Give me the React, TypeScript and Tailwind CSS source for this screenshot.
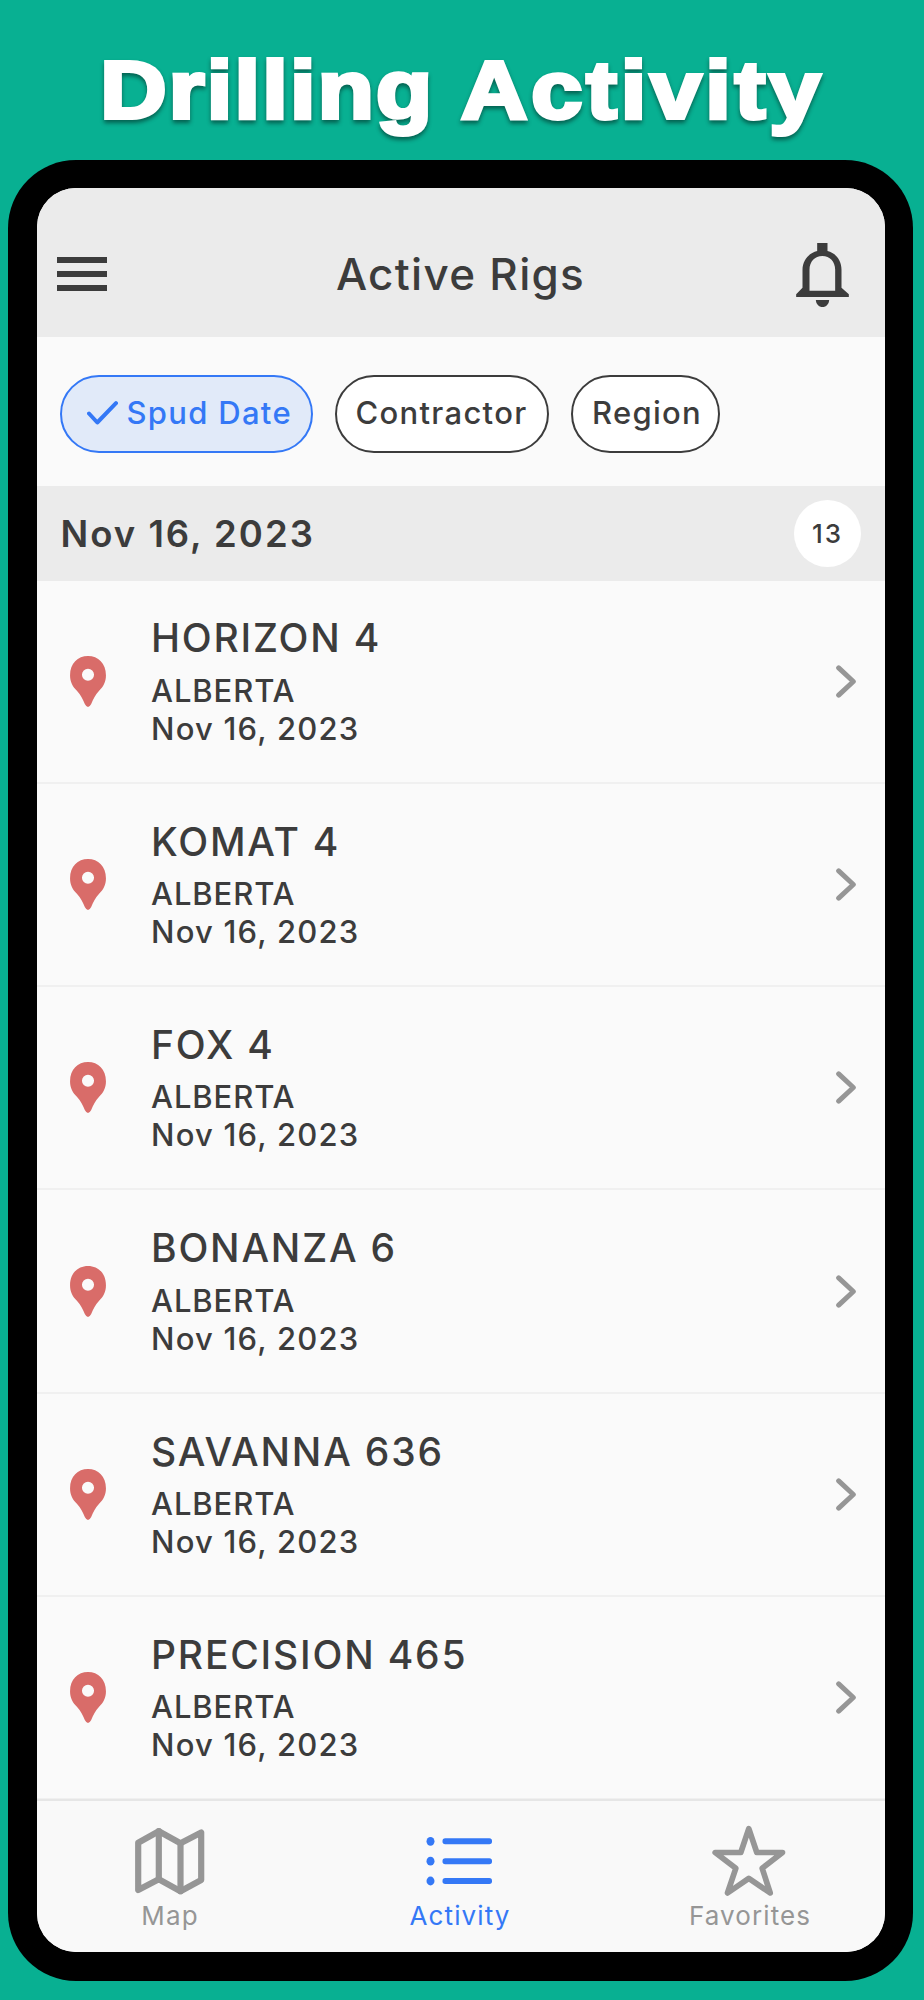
import React from 'react';
import clsx from 'clsx';

interface Rig {
  name: string;
  region: string;
  spudDate: string;
}

const RIGS: Rig[] = [
  { name: 'HORIZON 4', region: 'ALBERTA', spudDate: 'Nov 16, 2023' },
  { name: 'KOMAT 4', region: 'ALBERTA', spudDate: 'Nov 16, 2023' },
  { name: 'FOX 4', region: 'ALBERTA', spudDate: 'Nov 16, 2023' },
  { name: 'BONANZA 6', region: 'ALBERTA', spudDate: 'Nov 16, 2023' },
  { name: 'SAVANNA 636', region: 'ALBERTA', spudDate: 'Nov 16, 2023' },
  { name: 'PRECISION 465', region: 'ALBERTA', spudDate: 'Nov 16, 2023' },
];

const MenuIcon = () => (
  <svg className="w-[50px] h-[34px]" viewBox="0 0 50 34" fill="currentColor">
    <rect width="50" height="6" />
    <rect y="14" width="50" height="6" />
    <rect y="28" width="50" height="6" />
  </svg>
);

const BellIcon = () => (
  <svg className="w-[53px] h-[64px]" viewBox="0 0 158 192" fill="currentColor">
    <path
      fillRule="evenodd"
      d="M63 0H94V24C119 30 136 52 136 80V134L158 154V162H0V154L19 134V80C19 52 38 30 63 24ZM78.500 39C56 39 40 56 40 80V143H117V80C117 56 101 39 78.500 39Z"
    />
    <path d="M59 171H99C98 184 90 192 79 192C68 192 60 184 59 171Z" />
  </svg>
);

const CheckIcon = () => (
  <svg className="w-[31px] h-[24px]" viewBox="0 0 31 24" fill="none" stroke="currentColor" strokeWidth="4" strokeLinecap="round" strokeLinejoin="round">
    <path d="M2 12.500L10.300 21.500L29 2.200" />
  </svg>
);

const PinIcon = () => (
  <svg className="w-[36px] h-[51px] shrink-0 text-[#d96c69]" viewBox="0 0 107 152" fill="currentColor">
    <path
      fillRule="evenodd"
      d="M53.500 0C23 0 0 22 0 57C0 77 8 91 21 104C32 115 38 129 44 143Q53.500 161 63 143C69 129 75 115 86 104C99 91 107 77 107 57C107 22 84 0 53.500 0ZM53.500 38A18 18 0 1 1 53.500 74A18 18 0 1 1 53.500 38Z"
    />
  </svg>
);

const ChevronIcon = () => (
  <svg className="w-[20px] h-[33px] shrink-0 text-[#969696]" viewBox="0 0 60 98" fill="none" stroke="currentColor" strokeWidth="15" strokeLinecap="round" strokeLinejoin="round">
    <path d="M8 8L52 49L8 90" />
  </svg>
);

const MapIcon = () => (
  <svg className="w-[76px] h-[72px]" viewBox="0 0 76 72" fill="none" stroke="currentColor" strokeWidth="6.200" strokeLinecap="round" strokeLinejoin="round">
    <path d="M6.200 17.700L26.800 6.200L48.500 18.300L69.200 7.500V55L48.500 66.200L26.800 54.300L6.200 65V17.700Z" />
    <path d="M26.800 6.200V54.300M48.500 18.300V66.200" />
  </svg>
);

const ListIcon = () => (
  <svg className="w-[76px] h-[72px]" viewBox="0 0 76 72" fill="currentColor">
    {[16.3, 36.2, 56].map((y) => (
      <g key={y}>
        <ellipse cx="8.500" cy={y} rx="4" ry="4.400" />
        <rect x="20.500" y={y - 3} width="49.500" height="6" rx="2.700" />
      </g>
    ))}
  </svg>
);

const StarIcon = () => (
  <svg className="w-[76px] h-[72px]" viewBox="0 0 76 72" fill="none" stroke="currentColor" strokeWidth="5.700" strokeLinecap="round" strokeLinejoin="round">
    <path d="M36.800 3.700L44.800 27.500H70.500L50.200 43.300L58.200 68L36.800 53.400L15.500 68L23.800 43.300L3.200 27.500H28.800Z" />
  </svg>
);

const RigRow: React.FC<{ rig: Rig }> = ({ rig }) => (
  <li className="flex h-[203.3px] shrink-0 items-center border-b-2 border-[#f0f0f0] pl-[33.5px] pr-[28.5px]">
    <PinIcon />
    <div className="ml-[45px] flex-1 font-medium">
      <h2 className="mb-[9.5px] text-[39px] leading-[48px] tracking-[1.8px]">{rig.name}</h2>
      <p className="text-[31px] leading-[38px] tracking-[0.9px]">{rig.region}</p>
      <p className="text-[31px] leading-[38px] tracking-[1.2px]">{rig.spudDate}</p>
    </div>
    <ChevronIcon />
  </li>
);

const TabItem: React.FC<{ label: string; active?: boolean; children: React.ReactNode }> = ({ label, active, children }) => (
  <button className={clsx('flex flex-col items-center pt-6', active ? 'text-[#3478f6]' : 'text-[#969696]')}>
    {children}
    <span className="mt-[3px] text-[26px] leading-[32px] tracking-[1.1px]">{label}</span>
  </button>
);

export default function App() {
  return (
    <div className="flex h-[2000px] w-[924px] flex-col overflow-hidden bg-[#08b092] font-['Inter',sans-serif] text-[#3c3c3c]">
      <div className="flex h-[159.5px] shrink-0 justify-center pt-10">
        <h1 className="scale-x-[1.12] font-['Liberation_Sans',Arial,sans-serif] text-[82px] font-bold leading-[100px] tracking-[2px] [word-spacing:-1px] whitespace-nowrap text-white [-webkit-text-stroke:4px_white] drop-shadow-[0_3px_2px_rgba(0,0,0,0.45)]">
          Drilling <span className="tracking-[3.5px]">Activity</span>
        </h1>
      </div>

      {/* Phone frame */}
      <div className="ml-2 h-[1821px] w-[905px] shrink-0 rounded-[68px] bg-black p-[28.5px]">
        <div className="flex h-full flex-col overflow-hidden rounded-[39px] bg-[#fafafa]">
          <header className="grid h-[149px] shrink-0 grid-cols-[1fr_auto_1fr] items-center bg-[#ebebeb] px-[20.5px] pt-[23px]">
            <MenuIcon />
            <span className="text-[44px] leading-[52px] font-[450] tracking-[1.3px]">Active Rigs</span>
            <span className="mr-[15px] justify-self-end pt-0.5">
              <BellIcon />
            </span>
          </header>

          <div className="flex h-[149px] shrink-0 gap-[22px] pl-[23px] pt-[38px] text-[31px] font-medium tracking-[1.3px]">
            <button className="flex h-[78px] w-[253px] items-center gap-[9px] rounded-full border-2 border-[#3478f6] bg-[#e1eaf9] pb-0.5 pl-[25px] text-[#3478f6]">
              <CheckIcon />
              Spud Date
            </button>
            <button className="flex h-[78px] w-[214.5px] items-center rounded-full border-2 border-[#3c3c3c] bg-white pb-0.5 pl-[19px]">
              Contractor
            </button>
            <button className="flex h-[78px] w-[149px] items-center rounded-full border-2 border-[#3c3c3c] bg-white pb-0.5 pl-[19px]">
              Region
            </button>
          </div>

          <div className="flex h-[94.5px] shrink-0 items-center justify-between bg-[#ebebeb] pl-6 pr-[23.5px]">
            <span className="pt-0.5 text-[36.5px] font-semibold tracking-[2px]">Nov 16, 2023</span>
            <span className="flex size-[67px] items-center justify-center rounded-full bg-white text-[26px] font-medium tracking-[1.9px]">
              13
            </span>
          </div>

          <ul className="flex min-h-0 flex-1 flex-col overflow-hidden">
            {RIGS.map((rig) => (
              <RigRow key={rig.name} rig={rig} />
            ))}
          </ul>

          <nav className="h-[153px] shrink-0 border-t-2 border-[#e6e6e6] bg-[#f9f9f9]">
            <div className="-ml-[11.5px] -mr-[10.5px] grid grid-cols-3">
              <TabItem label="Map">
                <MapIcon />
              </TabItem>
              <TabItem label="Activity" active>
                <ListIcon />
              </TabItem>
              <TabItem label="Favorites">
                <StarIcon />
              </TabItem>
            </div>
          </nav>
        </div>
      </div>
    </div>
  );
}
